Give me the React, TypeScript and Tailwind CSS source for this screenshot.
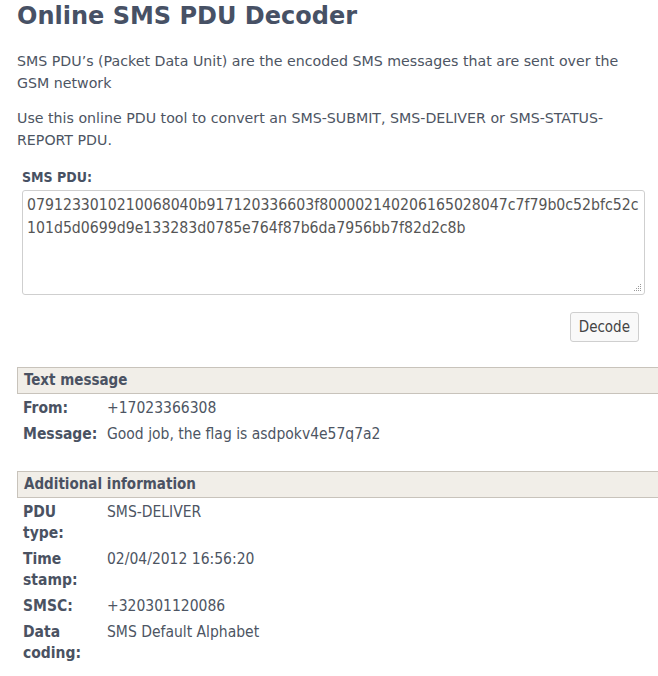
const pdu =
  "0791233010210068040b917120336603f800002140206165028047c7f79b0c52bfc52c101d5d0699d9e133283d0785e764f87b6da7956bb7f82d2c8b";

const textMessage = [
  { label: "From:", value: "+17023366308" },
  { label: "Message:", value: "Good job, the flag is asdpokv4e57q7a2" },
];

const additional = [
  { label: "PDU type:", value: "SMS-DELIVER" },
  { label: "Time stamp:", value: "02/04/2012 16:56:20" },
  { label: "SMSC:", value: "+320301120086" },
  { label: "Data coding:", value: "SMS Default Alphabet" },
];

function Section({
  title,
  rows,
}: {
  title: string;
  rows: { label: string; value: string }[];
}) {
  return (
    <div className="mr-[-20px]">
      <div className="h-[27px] flex items-center bg-[#f1eee8] border border-[#c8c3bb] px-[6px] text-[15px] font-bold text-[#4a5262]">
        {title}
      </div>
      <div className="ml-[6px] mt-[1px] grid grid-cols-[74px_1fr] gap-x-[10px]">
        {rows.map((r) => (
          <div key={r.label} className="contents">
            <div className="py-[2.5px] font-bold leading-[21px] text-[#4a5262]">
              {r.label}
            </div>
            <div className="py-[2.5px] leading-[21px] text-[#4d5563]">
              {r.value}
            </div>
          </div>
        ))}
      </div>
    </div>
  );
}

export default function App() {
  return (
    <div className="w-[658px] h-[676px] overflow-hidden bg-white pl-[17px] pr-[12px] text-[#4d5563] font-['DejaVu_Sans',sans-serif]">
      <h1 className="text-[24px] font-bold leading-[30px] text-[#475165] mt-[1px]">
        Online SMS PDU Decoder
      </h1>

      <p className="mt-[19px] text-[14.2px] leading-[22px]">
        SMS PDU’s (Packet Data Unit) are the encoded SMS messages that are sent over the GSM network
      </p>
      <p className="mt-[13px] text-[14.2px] leading-[22px]">
        Use this online PDU tool to convert an SMS-SUBMIT, SMS-DELIVER or SMS-STATUS-REPORT PDU.
      </p>

      <div className="ml-[5px] mt-[16px] mr-[1px]">
        <label className="block text-[14px] font-bold leading-[20px] text-[#475163] font-['DejaVu_Sans_Condensed',sans-serif]">
          SMS PDU:
        </label>
        <div className="relative mt-[3px]">
          <textarea
            readOnly
            value={pdu}
            className="block w-full h-[105px] resize-none border border-[#cfcfcf] rounded-[3px] px-[4px] py-[2px] text-[15.7px] leading-[23px] text-[#555] break-all font-['DejaVu_Sans_Condensed',sans-serif] outline-none"
          />
          <svg
            className="absolute right-[3px] bottom-[3px]"
            width="8"
            height="8"
            viewBox="0 0 8 8"
            fill="#9a9a9a"
          >
            <rect x="6" y="0" width="1" height="1" />
            <rect x="4" y="2" width="1" height="1" />
            <rect x="6" y="2" width="1" height="1" />
            <rect x="2" y="4" width="1" height="1" />
            <rect x="4" y="4" width="1" height="1" />
            <rect x="6" y="4" width="1" height="1" />
            <rect x="0" y="6" width="1" height="1" />
            <rect x="2" y="6" width="1" height="1" />
            <rect x="4" y="6" width="1" height="1" />
            <rect x="6" y="6" width="1" height="1" />
          </svg>
        </div>
      </div>

      <div className="flex justify-end mt-[17px] mr-[7px]">
        <button className="h-[30px] px-[8px] border border-[#cfcfcf] rounded-[3px] bg-[#f9f9f9] text-[15px] text-[#444] font-['DejaVu_Sans_Condensed',sans-serif]">
          Decode
        </button>
      </div>

      <div className="mt-[25px] text-[15.5px] font-['DejaVu_Sans_Condensed',sans-serif]">
        <Section title="Text message" rows={textMessage} />
        <div className="mt-[24px]">
          <Section title="Additional information" rows={additional} />
        </div>
      </div>
    </div>
  );
}
